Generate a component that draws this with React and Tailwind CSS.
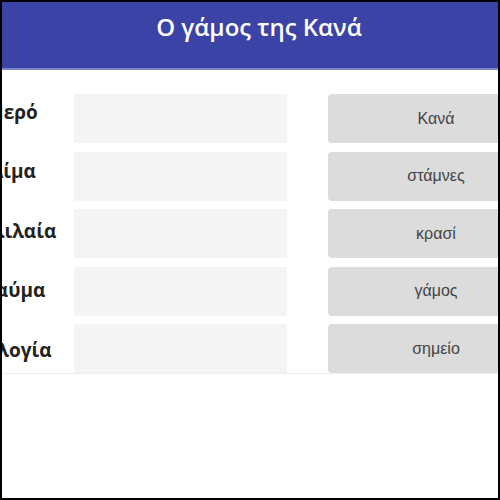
import React from "react";

const rows = [
  { label: "Νερό", answer: "Κανά" },
  { label: "Αίμα", answer: "στάμνες" },
  { label: "Γαλιλαία", answer: "κρασί" },
  { label: "Θαύμα", answer: "γάμος" },
  { label: "Ευλογία", answer: "σημείο" },
];

export default function App() {
  return (
    <div className="w-[500px] h-[500px] border-2 border-black bg-white overflow-hidden flex flex-col">
      <div className="h-[68px] shrink-0 bg-[#3b43a7] border-b-2 border-[#7e84cc] flex justify-center pt-[9px] pl-[18px]">
        <h1 className="text-white text-[24px] leading-[32px] font-semibold font-['Open_Sans','Noto_Sans',sans-serif]">
          Ο γάμος της Κανά
        </h1>
      </div>
      <div className="h-[304px] shrink-0 flex border-b border-[#ededed] w-[560px]">
        <div className="-ml-[39px] w-[100px] shrink-0 flex flex-col pt-[12px]">
          {rows.map((r) => (
            <div key={r.label} className="h-[59.5px] shrink-0 flex items-center justify-center">
              <span className="whitespace-nowrap text-[19px] leading-[24px] font-bold text-[#222] font-['Open_Sans','Noto_Sans',sans-serif]">
                {r.label}
              </span>
            </div>
          ))}
        </div>
        <div className="ml-[11px] w-[213px] shrink-0 flex flex-col gap-[8.5px] pt-[24px]">
          {rows.map((r) => (
            <div key={r.label} className="h-[49px] shrink-0 bg-[#f4f4f4]" />
          ))}
        </div>
        <div className="ml-[41px] w-[216px] shrink-0 flex flex-col gap-[8.5px] pt-[24px]">
          {rows.map((r) => (
            <div key={r.answer} className="h-[49px] shrink-0 bg-[#dcdcdc] rounded-[4px] flex items-center justify-center">
              <span className="text-[16px] text-[#444] font-['Liberation_Sans',Arial,sans-serif]">
                {r.answer}
              </span>
            </div>
          ))}
        </div>
      </div>
    </div>
  );
}
